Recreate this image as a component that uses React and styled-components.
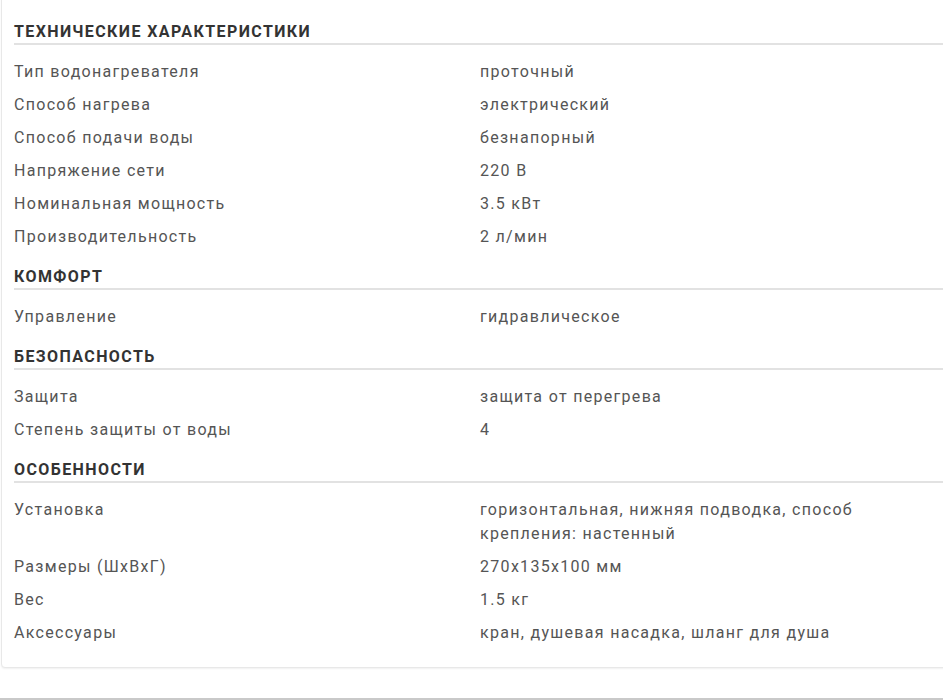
import React from 'react';
import styled, { createGlobalStyle } from 'styled-components';

const GlobalStyle = createGlobalStyle`
  html, body {
    margin: 0;
    padding: 0;
    background: #fff;
    overflow: hidden;
  }
  body {
    font-family: Roboto, "Liberation Sans", Arial, sans-serif;
  }
`;

const specs = [
  {
    title: 'Технические характеристики',
    rows: [
      ['Тип водонагревателя', 'проточный'],
      ['Способ нагрева', 'электрический'],
      ['Способ подачи воды', 'безнапорный'],
      ['Напряжение сети', '220 В'],
      ['Номинальная мощность', '3.5 кВт'],
      ['Производительность', '2 л/мин'],
    ],
  },
  {
    title: 'Комфорт',
    rows: [['Управление', 'гидравлическое']],
  },
  {
    title: 'Безопасность',
    rows: [
      ['Защита', 'защита от перегрева'],
      ['Степень защиты от воды', '4'],
    ],
  },
  {
    title: 'Особенности',
    rows: [
      ['Установка', 'горизонтальная, нижняя подводка, способ крепления: настенный'],
      ['Размеры (ШхВхГ)', '270x135x100 мм'],
      ['Вес', '1.5 кг'],
      ['Аксессуары', 'кран, душевая насадка, шланг для душа'],
    ],
  },
];

const App = () => {
  return (
    <Page>
      <GlobalStyle />
      <Card>
        {specs.map((group) => (
          <Section key={group.title}>
            <Heading>{group.title}</Heading>
            <List>
              {group.rows.map(([name, value]) => (
                <Row key={name}>
                  <Name>{name}</Name>
                  <Value>{value}</Value>
                </Row>
              ))}
            </List>
          </Section>
        ))}
      </Card>
      <NextBlock />
    </Page>
  );
};

export default App;

const Page = styled.div`
  width: 943px;
  height: 700px;
  overflow: hidden;
`;

const Card = styled.div`
  width: 960px;
  margin-top: -6px;
  margin-left: 1px;
  padding: 14px 0 17px 12px;
  box-sizing: border-box;
  border: 1px solid #e8e8e8;
  border-radius: 4px;
  box-shadow: 0 1px 2px rgba(0, 0, 0, 0.06);
  background: #fff;
`;

const Section = styled.section`
  display: flex;
  flex-direction: column;
`;

const Heading = styled.h3`
  margin: 13px 0 0;
  padding-bottom: 1px;
  border-bottom: 2px solid #e2e2e2;
  font-size: 16px;
  line-height: 20px;
  font-weight: 700;
  letter-spacing: 1.4px;
  text-transform: uppercase;
  color: #333;
`;

const List = styled.div`
  padding-top: 11px;
`;

const Row = styled.div`
  display: grid;
  grid-template-columns: 466px 420px;
  padding: 4px 0 5px;
  font-size: 16px;
  line-height: 24px;
  letter-spacing: 1.3px;
  color: #555;
`;

const Name = styled.div``;

const Value = styled.div``;

const NextBlock = styled.div`
  margin-top: 30px;
  border-top: 2px solid #c9c9c9;
  height: 20px;
`;
